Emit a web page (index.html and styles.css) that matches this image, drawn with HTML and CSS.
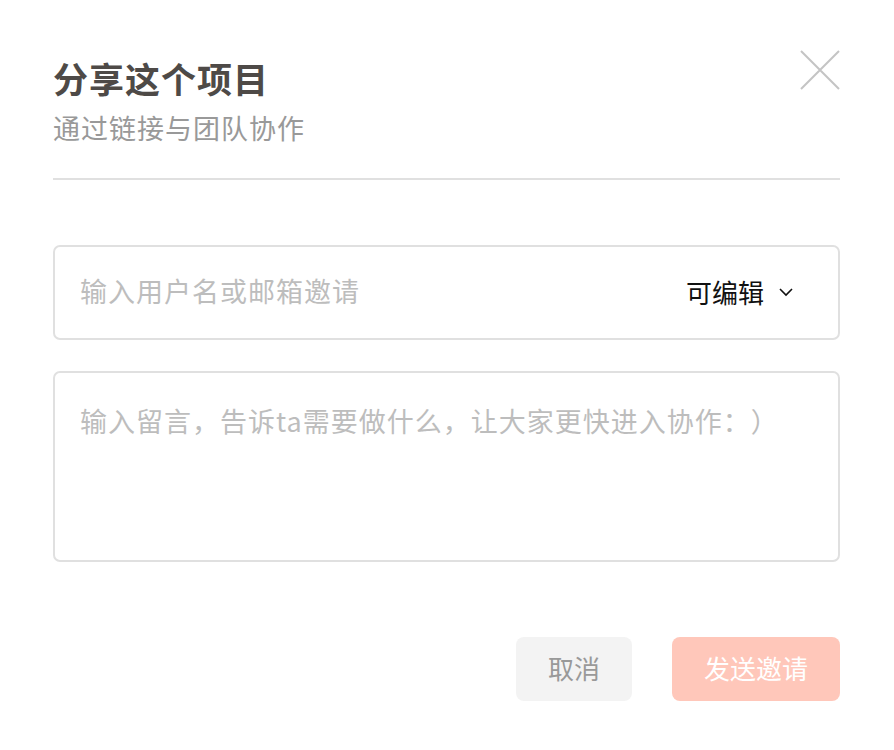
FILE: index.html
```html
<!DOCTYPE html>
<html lang="zh">
<head>
<meta charset="utf-8">
<link rel="stylesheet" href="styles.css">
</head>
<body>
<div class="dialog">
  <div class="header">
    <div class="titles">
      <h1 class="title">分享这个项目</h1>
      <p class="subtitle">通过链接与团队协作</p>
    </div>
    <button class="close" aria-label="关闭">
      <svg width="40" height="40" viewBox="0 0 40 40"><path d="M1 1L39 39M39 1L1 39" stroke="#c4c4c4" stroke-width="2" fill="none"/></svg>
    </button>
  </div>
  <div class="divider"></div>
  <div class="invite">
    <span class="placeholder">输入用户名或邮箱邀请</span>
    <span class="perm">可编辑
      <svg class="chev" width="16" height="10" viewBox="0 0 16 10"><path d="M2 2L8 8L14 2" stroke="#111" stroke-width="1.6" fill="none"/></svg>
    </span>
  </div>
  <div class="message">
    <span class="placeholder">输入留言，告诉ta需要做什么，让大家更快进入协作：）</span>
  </div>
  <div class="actions">
    <button class="btn cancel">取消</button>
    <button class="btn send">发送邀请</button>
  </div>
</div>
</body>
</html>
```
FILE: styles.css
```css
* { box-sizing: border-box; }
html, body { margin: 0; padding: 0; background: #fff; }
body { font-family: "Noto Sans CJK SC", "Noto Sans", sans-serif; text-spacing-trim: space-all; }
.dialog { width: 894px; padding: 50px 54px 0 53px; }
.header { display: flex; justify-content: space-between; align-items: flex-start; }
.title { margin: 0; font-size: 35px; line-height: 1; font-weight: 700; color: #4e4a47; padding-top: 10px; letter-spacing: 1px; }
.subtitle { margin: 17px 0 0; font-size: 27px; line-height: 1.2; color: #999; letter-spacing: 1px; }
.close { border: 0; background: none; padding: 0; width: 40px; height: 40px; margin-right: 0; }
.close svg { display: block; }
.divider { height: 2px; background: #e0e0e0; margin-top: 34px; }
.invite { margin-top: 65px; height: 95px; border: 2px solid #e0e0e0; border-radius: 7px; display: flex; align-items: center; justify-content: space-between; padding: 0 44px 4px 25px; }
.placeholder { font-size: 27px; color: #bdbdbd; letter-spacing: 1px; }
.perm { font-size: 26px; color: #111; display: flex; align-items: center; gap: 14px; padding-top: 2px; }
.chev { display: block; }
.message { margin-top: 31px; height: 191px; border: 2px solid #e0e0e0; border-radius: 7px; padding: 28px 25px; }
.actions { margin-top: 75px; display: flex; justify-content: flex-end; gap: 40px; }
.btn { border: 0; height: 64px; border-radius: 8px; font-family: inherit; font-size: 26px; padding: 0 0 4px; }
.cancel { width: 116px; background: #f3f3f3; color: #999; }
.send { width: 168px; background: #ffc7ba; color: #fff; }
```
